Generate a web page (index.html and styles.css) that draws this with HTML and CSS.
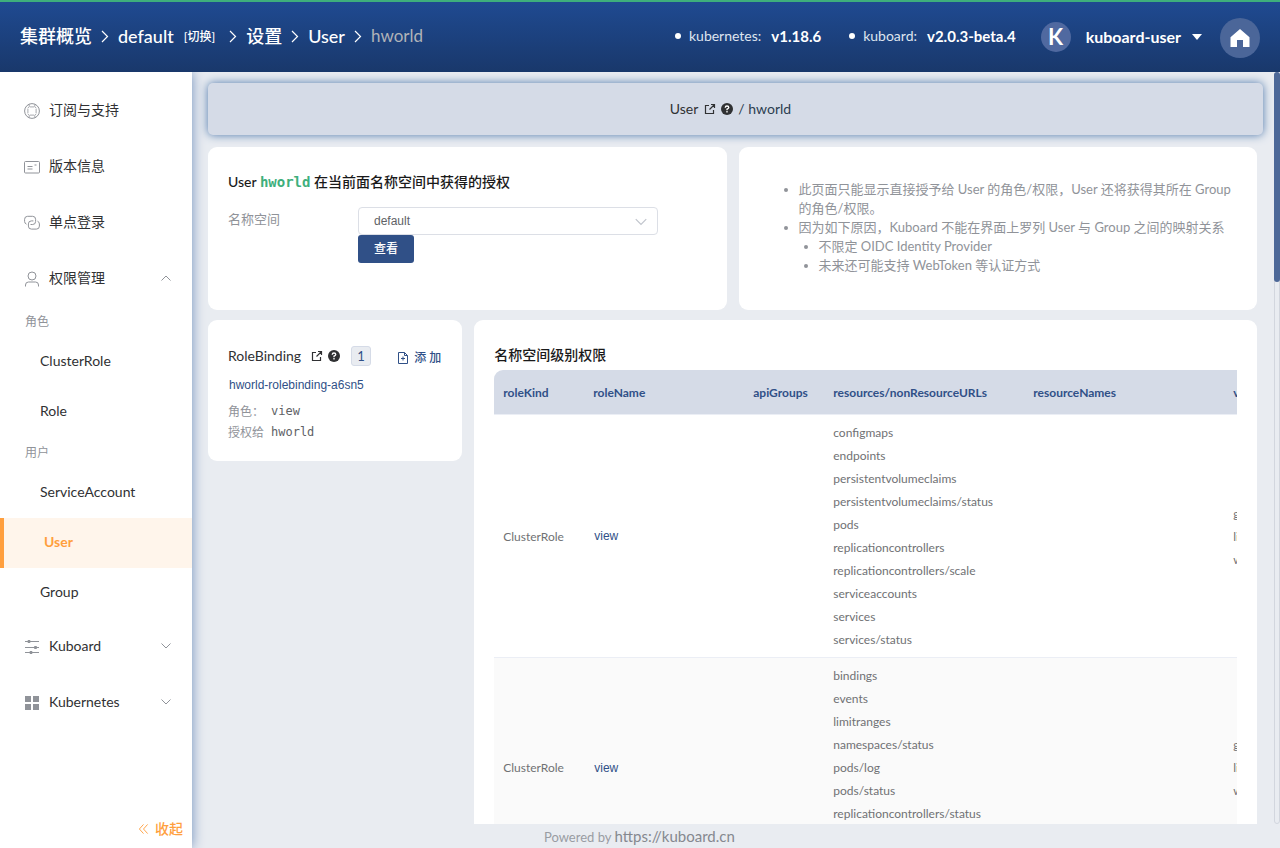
FILE: index.html
```html
<!DOCTYPE html>
<html lang="zh-CN">
<head>
<meta charset="utf-8">
<meta name="viewport" content="width=device-width, initial-scale=1">
<title>Kuboard - User / hworld</title>
<link rel="stylesheet" href="styles.css">
</head>
<body>
<svg class="defs" aria-hidden="true">
  <symbol id="i-right" viewBox="0 0 10 16"><path d="M2 3l5.500 5.500L2 14" fill="none" stroke="currentColor" stroke-width="1.200"/></symbol>
  <symbol id="i-down" viewBox="0 0 12 12"><path d="M1.500 3.500L6 8l4.500-4.500" fill="none" stroke="currentColor"/></symbol>
  <symbol id="i-open" viewBox="0 0 12 12"><path d="M5 2.500H1.500v8h8V7M7 1.500h3.500V5M10.500 1.500L5.500 6.500" fill="none" stroke="currentColor" stroke-width="1.200"/></symbol>
  <symbol id="i-help" viewBox="0 0 12 12"><circle cx="6" cy="6" r="6" fill="currentColor"/><path d="M4.200 4.700Q4.300 3 6 3t1.800 1.600Q7.800 5.600 6 6.200V7.200M6 8.100v1.300" fill="none" stroke="#fff" stroke-width="1.300"/></symbol>
</svg>
<header class="topbar">
  <nav class="crumbs" aria-label="breadcrumb">
    <a href="#">集群概览</a>
    <svg class="crumb-sep"><use href="#i-right"/></svg>
    <a href="#">default</a>
    <a class="switch" href="#">[切换]</a>
    <svg class="crumb-sep"><use href="#i-right"/></svg>
    <a href="#">设置</a>
    <svg class="crumb-sep"><use href="#i-right"/></svg>
    <a href="#">User</a>
    <svg class="crumb-sep"><use href="#i-right"/></svg>
    <span class="current">hworld</span>
  </nav>
  <div class="top-right">
    <div class="version"><i class="dot"></i><span>kubernetes:</span><b>v1.18.6</b></div>
    <div class="version"><i class="dot"></i><span>kuboard:</span><b>v2.0.3-beta.4</b></div>
    <button class="account" type="button"><span class="avatar">K</span><span>kuboard-user</span><i class="caret"></i></button>
    <a class="home" href="#" aria-label="home"><svg viewBox="0 0 20 20"><path d="M10 1L.5 9.200V19h6.500v-7h6v7h6.500V9.200z" fill="#fff"/></svg></a>
  </div>
</header>
<div class="shell">
  <aside class="sidebar">
    <nav class="menu">
      <a class="item" href="#"><svg viewBox="0 0 16 16"><circle cx="8" cy="8" r="7.400"/><path d="M5.800 3.900h4.400M5.800 12.100h4.400M3.900 5.800v4.400M12.100 5.800v4.400M5.200 1.200v2.500L3.700 5.200M10.800 1.200v2.500l1.500 1.500M5.200 14.800v-2.500l-1.500-1.500M10.800 14.800v-2.500l1.500-1.500" stroke-width=".8"/></svg><span>订阅与支持</span></a>
      <a class="item" href="#"><svg viewBox="0 0 16 16"><rect x=".5" y="2.500" width="15" height="11.500" rx="1"/><path d="M3.500 7.500h5M3.500 10h5M10.500 6h2"/></svg><span>版本信息</span></a>
      <a class="item" href="#"><svg viewBox="0 0 16 16"><path d="M2.500 9.200A3 3 0 0 1 .6 6.500V4.300a3 3 0 0 1 3-3h5a3 3 0 0 1 3 3v2.200a3 3 0 0 1-3 3H6.500"/><path d="M13.500 6.200a3 3 0 0 1 1.900 2.700v2.200a3 3 0 0 1-3 3h-5a3 3 0 0 1-3-3V8.900a3 3 0 0 1 3-3h2"/></svg><span>单点登录</span></a>
      <a class="item" href="#"><svg viewBox="0 0 16 16"><circle cx="8" cy="5" r="4"/><path d="M1.500 15.500v-1.500a3 3 0 0 1 3-3h7a3 3 0 0 1 3 3v1.500"/></svg><span>权限管理</span><svg class="arrow up"><use href="#i-down"/></svg></a>
      <div class="group">角色</div>
      <a class="sub" href="#">ClusterRole</a>
      <a class="sub" href="#">Role</a>
      <div class="group">用户</div>
      <a class="sub" href="#">ServiceAccount</a>
      <a class="sub active" href="#">User</a>
      <a class="sub" href="#">Group</a>
      <a class="item" href="#"><svg viewBox="0 0 16 16"><path d="M1 2.500h14M1 8.500h14M1 13.500h14"/><path d="M5 1v3M11.500 7v3M7 12v3" stroke-width="2.500"/></svg><span>Kuboard</span><svg class="arrow"><use href="#i-down"/></svg></a>
      <a class="item" href="#"><svg class="solid" viewBox="0 0 16 16"><path d="M1 1h6v6H1zM9 1h6v6H9zM1 9h6v6H1zM9 9h6v6H9z"/></svg><span>Kubernetes</span><svg class="arrow"><use href="#i-down"/></svg></a>
    </nav>
    <button class="collapse" type="button"><svg viewBox="0 0 12 12"><path d="M6 1L1.500 6 6 11M10.500 1L6 6l4.500 5" fill="none" stroke="currentColor"/></svg>收起</button>
  </aside>
  <div class="page">
    <main class="scroll">
      <div class="banner">
        <a href="#">User</a><svg class="mini"><use href="#i-open"/></svg><svg class="mini"><use href="#i-help"/></svg><span class="banner-name">/ hworld</span>
      </div>
      <div class="row halves">
        <section class="card">
          <h2 class="title">User <code>hworld</code> 在当前面名称空间中获得的授权</h2>
          <form class="form">
            <label for="ns">名称空间</label>
            <div class="controls">
              <div class="select"><select id="ns"><option>default</option></select><svg><use href="#i-down"/></svg></div>
              <button class="primary" type="button">查看</button>
            </div>
          </form>
        </section>
        <section class="card notes">
          <ul>
            <li>此页面只能显示直接授予给 User 的角色/权限，User 还将获得其所在 Group 的角色/权限。</li>
            <li>因为如下原因，Kuboard 不能在界面上罗列 User 与 Group 之间的映射关系
              <ul><li>不限定 OIDC Identity Provider</li><li>未来还可能支持 WebToken 等认证方式</li></ul>
            </li>
          </ul>
        </section>
      </div>
      <div class="row quarters">
        <section class="card binding">
          <div class="binding-head"><h2>RoleBinding</h2><svg class="mini"><use href="#i-open"/></svg><svg class="mini"><use href="#i-help"/></svg><span class="count">1</span>
            <button class="add" type="button"><svg viewBox="0 0 12 12"><path d="M7.500.5h-6v11h9v-8zM7.500.5v3h3M6 4.500v4M4 6.500h4" fill="none" stroke="currentColor"/></svg>添 加</button></div>
          <a class="link" href="#">hworld-rolebinding-a6sn5</a>
          <dl><dt>角色：</dt><dd>view</dd><dt>授权给</dt><dd>hworld</dd></dl>
        </section>
        <section class="card rules">
          <h2 class="title">名称空间级别权限</h2>
          <div class="table-wrap">
            <table>
              <colgroup><col class="c-kind"><col class="c-name"><col class="c-api"><col class="c-res"><col class="c-res"><col class="c-verb"></colgroup>
              <thead><tr><th>roleKind</th><th>roleName</th><th>apiGroups</th><th>resources/nonResourceURLs</th><th>resourceNames</th><th>verbs</th></tr></thead>
              <tbody>
                <tr><td>ClusterRole</td><td><a class="link" href="#">view</a></td><td></td>
                  <td>configmaps<br>endpoints<br>persistentvolumeclaims<br>persistentvolumeclaims/status<br>pods<br>replicationcontrollers<br>replicationcontrollers/scale<br>serviceaccounts<br>services<br>services/status</td>
                  <td></td><td>get<br>list<br>watch</td></tr>
                <tr><td>ClusterRole</td><td><a class="link" href="#">view</a></td><td></td>
                  <td>bindings<br>events<br>limitranges<br>namespaces/status<br>pods/log<br>pods/status<br>replicationcontrollers/status<br>resourcequotas<br>resourcequotas/status</td>
                  <td></td><td>get<br>list<br>watch</td></tr>
              </tbody>
            </table>
          </div>
        </section>
      </div>
      <div class="track"><div class="thumb"></div></div>
    </main>
    <footer class="footer">Powered by <a href="#">https://kuboard.cn</a></footer>
  </div>
</div>
</body>
</html>
```
FILE: styles.css
```css
* { box-sizing: border-box; }
body {
  margin: 0;
  height: 100vh;
  display: flex;
  flex-direction: column;
  overflow: hidden;
  background: #e9ecf1;
  color: #303133;
  font: 14px/20px Lato, "Noto Sans CJK SC", sans-serif;
}
a { color: inherit; text-decoration: none; }
button { border: 0; background: none; padding: 0; font: inherit; color: inherit; cursor: pointer; }
h2, ul, dl, dd { margin: 0; }
.defs { position: absolute; width: 0; height: 0; }

.topbar {
  flex: none;
  position: relative;
  z-index: 2;
  height: 72px;
  padding: 0 20px 2px;
  display: flex;
  align-items: center;
  justify-content: space-between;
  border-top: 2px solid #3eaf7c;
  background: linear-gradient(#1f4a91, #19386b);
  color: #fff;
}
.crumbs { display: flex; align-items: center; font-size: 18px; font-weight: 500; line-height: 24px; }
.crumb-sep { width: 10px; height: 16px; margin: 0 8px; }
.crumbs .switch { margin: 2px 5px 0 10px; font-size: 12px; }
.crumbs .current { color: #b0b3b8; font-size: 17px; font-weight: 400; }
.top-right { display: flex; align-items: center; }
.version { display: flex; align-items: center; margin-right: 28px; font-size: 14px; }
.version span { color: #dfe5ef; margin: 0 10px 0 8px; }
.version b { font-size: 15px; }
.dot { width: 6px; height: 6px; border-radius: 50%; background: #fff; }
.account { display: flex; align-items: center; margin: 2px 18px 0 -3px; font-size: 16px; font-weight: 700; }
.avatar { width: 30px; height: 30px; margin-right: 15px; border-radius: 50%; background: #5069a0; font-size: 22px; line-height: 30px; text-align: center; }
.caret { margin-left: 11px; border: 5px solid transparent; border-top: 6px solid #fff; border-bottom: 0; }
.home { display: flex; align-items: center; justify-content: center; width: 40px; height: 40px; margin-top: 4px; border-radius: 50%; background: #4b6699; }
.home svg { width: 20px; height: 20px; }

.shell { flex: 1; min-height: 0; display: flex; }
.sidebar {
  flex: none;
  width: 192px;
  display: flex;
  flex-direction: column;
  justify-content: space-between;
  background: #fff;
  box-shadow: 0 0 12px #6f8ebb;
  z-index: 1;
}
.menu { padding-top: 10px; }
.item { display: flex; align-items: center; height: 56px; padding: 0 20px 0 24px; }
.item svg { width: 16px; height: 16px; margin: 2px 9px 0 0; fill: none; stroke: #909399; }
.item svg.solid { fill: #909399; stroke: none; }
.item svg.arrow { width: 12px; height: 12px; margin: 0 0 0 auto; color: #909399; }
.arrow.up { transform: rotate(180deg); }
.group { height: 31px; padding: 0 25px; color: #909399; font-size: 12px; line-height: 31px; }
.sub { display: block; height: 50px; padding-left: 40px; line-height: 48px; }
.sub.active { border-left: 4px solid #ff9f3e; background: #fff5eb; color: #ff9f3e; font-weight: 700; }
.collapse { display: flex; align-items: center; align-self: flex-end; gap: 6px; margin: 0 9px 9px 0; color: #ff9f3e; font-weight: 500; }
.collapse svg { width: 11px; height: 12px; }

.page { flex: 1; min-width: 0; display: flex; flex-direction: column; }
.scroll { flex: 1; min-height: 0; position: relative; overflow: hidden; padding: 11px 17px 0 16px; }
.banner {
  display: flex;
  align-items: center;
  justify-content: center;
  height: 52px;
  margin-bottom: 12px;
  padding: 0 10px 0 0;
  border-radius: 5px;
  background: #d5dbe7;
  box-shadow: 0 0 10px #4f78ac;
}
.mini { width: 12px; height: 12px; margin-left: 6px; }
.mini + .mini { margin-left: 5px; }
.banner-name { margin-left: 5px; color: #2c3e50; }
.row { display: grid; gap: 12px; align-items: start; margin: 0 6px 10px 0; }
.halves { grid-template-columns: 1fr 1fr; align-items: stretch; }
.quarters { grid-template-columns: calc(25% - 8px) 1fr; }
.card { min-width: 0; padding: 25px 20px 20px; border-radius: 9px; background: #fff; }
.halves .card { min-height: 163px; }
.title { font-size: 14px; line-height: 20px; font-weight: 500; color: #1a1a1a; }
.title code { color: #3eaf7c; font: 700 14px/20px "DejaVu Sans Mono", monospace; }
.form { display: flex; margin-top: 15px; }
.form label { flex: 0 0 130px; padding-top: 2px; color: #909399; font-size: 13px; }
.select { position: relative; width: 300px; }
.select select {
  display: block;
  width: 100%;
  height: 28px;
  padding: 0 30px 0 15px;
  appearance: none;
  border: 1px solid #dcdfe6;
  border-radius: 4px;
  background: #fff;
  color: #606266;
  font: 12px "Liberation Sans", sans-serif;
}
.select svg { position: absolute; right: 10px; top: 8px; width: 14px; height: 14px; color: #c0c4cc; }
.primary { display: block; height: 28px; padding: 0 16px; border-radius: 3px; background: #305087; color: #fff; font-size: 12px; font-weight: 500; line-height: 28px; }
.notes { padding-top: 33px; color: #909399; font-size: 13px; line-height: 19px; }
.notes ul { padding-left: 40px; }
.notes ul ul { padding-left: 20px; list-style: disc; }

.binding-head { display: flex; align-items: center; height: 22px; }
.binding h2 { margin-right: 4px; font-size: 14px; font-weight: 400; }
.count { margin-left: 11px; padding: 0 5px; border: 1px solid #d5dbe7; border-radius: 3px; background: #e9ecf1; color: #305087; font-size: 13px; line-height: 18px; }
.add { display: flex; align-items: center; gap: 5px; margin: 4px 1px 0 auto; color: #305087; font-size: 12px; font-weight: 500; white-space: nowrap; }
.add svg { width: 12px; height: 12px; }
.link { color: #305087; font-family: "Liberation Sans", sans-serif; font-size: 12px; }
.binding > .link { display: block; margin: 8px 0 6px 1px; }
dl { display: grid; grid-template-columns: 43px 1fr; color: #909399; font-size: 12px; line-height: 21px; }
dd { color: #606266; font-family: "DejaVu Sans Mono", monospace; }
.binding { padding-bottom: 18px; }
.table-wrap { margin-top: 5px; overflow-x: auto; border-top-left-radius: 9px; }
table { width: 850px; table-layout: fixed; border-collapse: separate; border-spacing: 0; color: #707174; font-size: 12px; line-height: 23px; }
.c-kind { width: 90px; }
.c-name { width: 160px; }
.c-api { width: 80px; }
.c-res { width: 200px; }
.c-verb { width: 120px; }
th { height: 45px; padding: 0 9px; border-bottom: 1px solid #ebeef5; background: #d5dbe7; color: #305087; text-align: left; font-weight: 700; white-space: nowrap; }
td { padding: 6px 9px; border-bottom: 1px solid #ebeef5; }
td .link { margin-left: 1px; }
tbody tr:nth-child(2) { background: #fafafa; }
.track { position: absolute; top: 0; right: 0; bottom: 0; width: 6px; border: 1px solid #d2d6de; border-radius: 3px; background: #e9ecf1; }
.thumb { height: 28%; margin: -1px; border-radius: 3px; background: #4d6898; }
.footer { flex: none; height: 24px; padding-left: 352px; color: #999ca3; font-size: 13px; line-height: 24px; }
.footer a { color: #85888f; font-size: 15px; }
```
